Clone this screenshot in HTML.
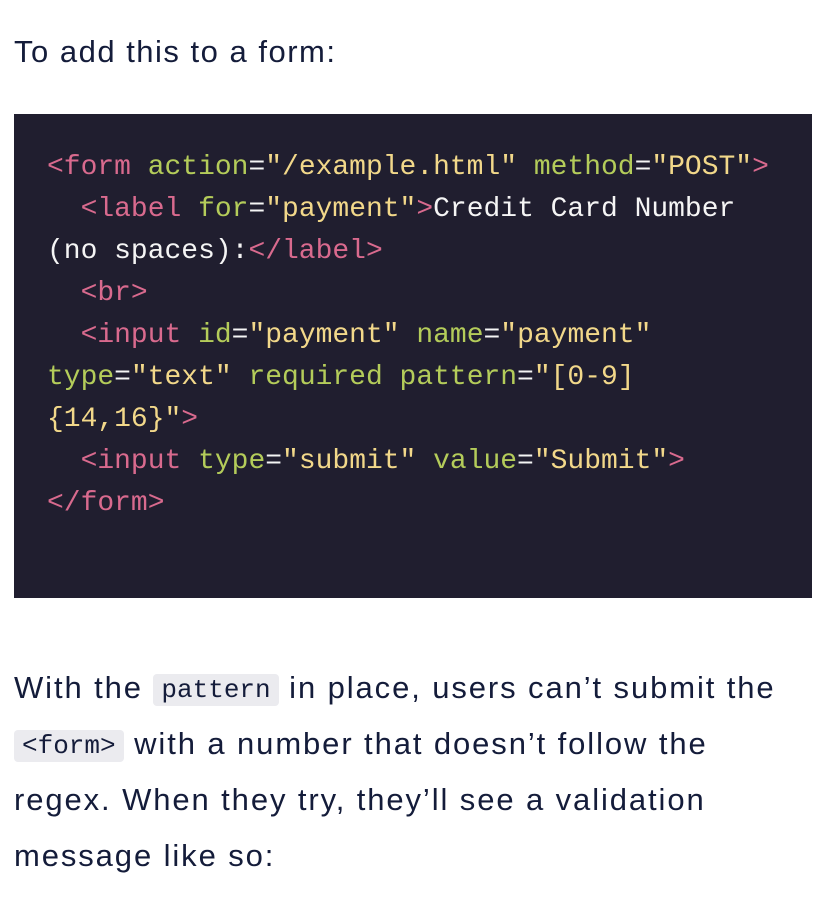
<!DOCTYPE html>
<html><head><style>
body{margin:0;background:#fff;width:824px;height:904px;overflow:hidden;font-family:"Liberation Sans",sans-serif;color:#141c3a}
p{margin:0;position:absolute;left:14px;font-size:31px;letter-spacing:1.9px}
.p1{top:30px;line-height:44px;letter-spacing:1.5px}
.p2{top:660px;line-height:56px;width:810px}
code{font-family:"Liberation Mono",monospace;font-size:26px;line-height:20px;display:inline-block;background:#ebebef;border-radius:4px;padding:6px 8px;letter-spacing:0;vertical-align:1px}
pre{position:absolute;left:14px;top:114px;width:798px;height:484px;margin:0;background:#201e2f;box-sizing:border-box;padding:33px 0 0 33px;font-family:"Liberation Mono",monospace;font-size:28px;line-height:42px;color:#f5f5f5}
pre div{transform:scaleX(0.999);transform-origin:0 0;white-space:pre}
.t{color:#d96a8e}.a{color:#b4cc5a}.s{color:#f2d88a}
</style></head><body>
<p class="p1">To add this to a form:</p>
<pre><div><span class="t">&lt;form</span> <span class="a">action</span>=<span class="s">"/example.html"</span> <span class="a">method</span>=<span class="s">"POST"</span><span class="t">&gt;</span>
  <span class="t">&lt;label</span> <span class="a">for</span>=<span class="s">"payment"</span><span class="t">&gt;</span>Credit Card Number
(no spaces):<span class="t">&lt;/label&gt;</span>
  <span class="t">&lt;br&gt;</span>
  <span class="t">&lt;input</span> <span class="a">id</span>=<span class="s">"payment"</span> <span class="a">name</span>=<span class="s">"payment"</span>
<span class="a">type</span>=<span class="s">"text"</span> <span class="a">required</span> <span class="a">pattern</span>=<span class="s">"[0-9]
{14,16}"</span><span class="t">&gt;</span>
  <span class="t">&lt;input</span> <span class="a">type</span>=<span class="s">"submit"</span> <span class="a">value</span>=<span class="s">"Submit"</span><span class="t">&gt;</span>
<span class="t">&lt;/form&gt;</span></div></pre>
<p class="p2">With the <code>pattern</code> in place, users can’t submit the<br><code>&lt;form&gt;</code> with a number that doesn’t follow the<br>regex. When they try, they’ll see a validation<br>message like so:</p>
</body></html>
